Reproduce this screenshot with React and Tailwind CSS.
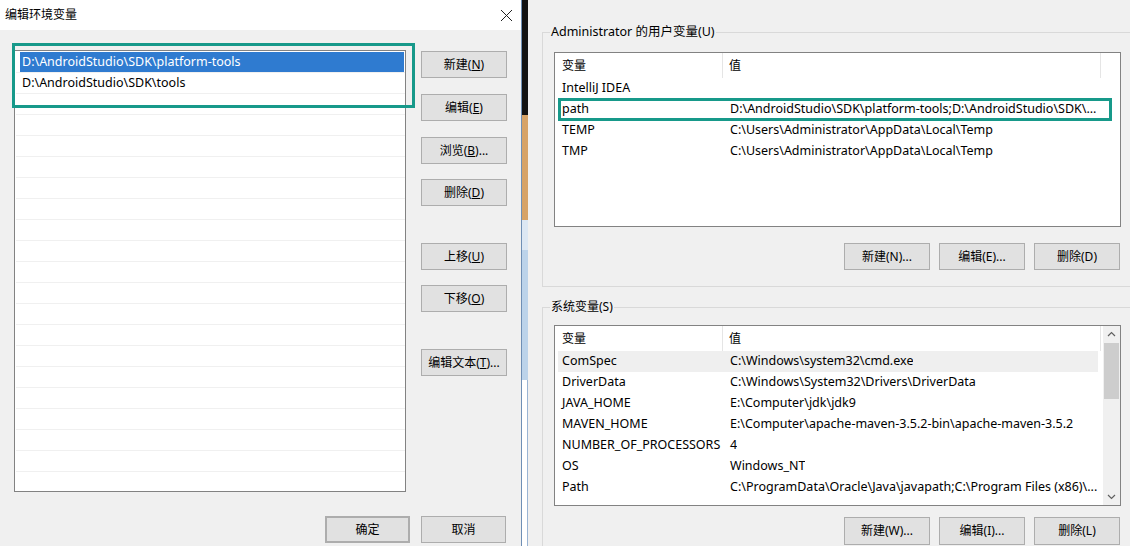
import React from "react";

const FONT = "font-['Noto_Sans','Noto_Sans_CJK_SC',sans-serif]";

const Btn = ({ children, className = "" }) => (
  <div
    className={`flex items-center justify-center h-[27px] bg-[#e1e1e1] border border-[#adadad] text-[12px] text-black leading-none ${className}`}
  >
    {children}
  </div>
);

const userVars = [
  ["IntelliJ IDEA", ""],
  ["path", "D:\\AndroidStudio\\SDK\\platform-tools;D:\\AndroidStudio\\SDK\\..."],
  ["TEMP", "C:\\Users\\Administrator\\AppData\\Local\\Temp"],
  ["TMP", "C:\\Users\\Administrator\\AppData\\Local\\Temp"],
];

const sysVars = [
  ["ComSpec", "C:\\Windows\\system32\\cmd.exe"],
  ["DriverData", "C:\\Windows\\System32\\Drivers\\DriverData"],
  ["JAVA_HOME", "E:\\Computer\\jdk\\jdk9"],
  ["MAVEN_HOME", "E:\\Computer\\apache-maven-3.5.2-bin\\apache-maven-3.5.2"],
  ["NUMBER_OF_PROCESSORS", "4"],
  ["OS", "Windows_NT"],
  ["Path", "C:\\ProgramData\\Oracle\\Java\\javapath;C:\\Program Files (x86)\\..."],
];

const ListHeader = () => (
  <div className="flex h-[25px] items-center text-[12px]">
    <div className="w-[168px] h-full flex items-center pl-[7px] border-r border-[#e5e5e5]">变量</div>
    <div className="w-[378px] h-full flex items-center pl-[6px] border-r border-[#e5e5e5]">值</div>
  </div>
);

const VarRow = ({ name, value, active }) => (
  <div className={`flex h-[21px] items-center text-[12.5px] ml-[3px] w-[540px] ${active ? "bg-[#efefef]" : ""}`}>
    <div className="w-[165px] pl-[4px] whitespace-nowrap">{name}</div>
    <div className="pl-[7px] whitespace-nowrap overflow-hidden">{value}</div>
  </div>
);

const LeftDialog = () => {
  const rows = Array.from({ length: 21 });
  return (
    <div className="w-[521px] h-full flex flex-col">
      <div className="h-[30px] bg-white flex items-center justify-between pl-[5px] pr-[8px]">
        <span className="text-[12px] text-black">编辑环境变量</span>
        <svg width="13" height="13" viewBox="0 0 13 13">
          <path d="M1 1 L12 12 M12 1 L1 12" stroke="#222" strokeWidth="1" fill="none" />
        </svg>
      </div>
      <div className="flex-1 bg-[#f0f0f0] flex flex-col">
        <div className="flex pt-[20px] pl-[14px]">
          <div className="relative w-[392px] h-[442px] bg-white border border-[#828282] pt-[1px] pl-[1px] overflow-visible">
            <div className="overflow-hidden h-full">
              {rows.map((_, i) => (
                <div key={i} className="h-[21px] border-b border-[#f0f0f0] flex items-center">
                  {i === 0 && (
                    <div className="ml-[4px] w-[384px] h-[20px] bg-[#2f7bd0] text-white text-[12.5px] flex items-center pl-[2px]">
                      D:\AndroidStudio\SDK\platform-tools
                    </div>
                  )}
                  {i === 1 && (
                    <div className="ml-[6px] text-[12.5px] text-black">D:\AndroidStudio\SDK\tools</div>
                  )}
                </div>
              ))}
            </div>
            <div className="absolute left-[-3px] top-[-8px] w-[403px] h-[65px] border-[3px] border-[#17998a]" />
          </div>
          <div className="ml-[15px] w-[86px] flex flex-col">
            <Btn className="mt-[1px]">新建(<u>N</u>)</Btn>
            <Btn className="mt-[16px]">编辑(<u>E</u>)</Btn>
            <Btn className="mt-[16px]">浏览(<u>B</u>)...</Btn>
            <Btn className="mt-[15px]">删除(<u>D</u>)</Btn>
            <Btn className="mt-[37px]">上移(<u>U</u>)</Btn>
            <Btn className="mt-[15px]">下移(<u>O</u>)</Btn>
            <Btn className="mt-[37px]">编辑文本(<u>T</u>)...</Btn>
          </div>
        </div>
        <div className="flex justify-end gap-[11px] pr-[15px] mt-[24px]">
          <Btn className="w-[85px] border-2 border-[#0078d7]">确定</Btn>
          <Btn className="w-[85px]">取消</Btn>
        </div>
      </div>
    </div>
  );
};

const Strip = () => (
  <div className="w-[7px] h-full flex flex-col border-l border-[#6f8fb5]">
    <div className="h-[115px] bg-[#121212]" />
    <div className="h-[105px] bg-[#d6a368]" />
    <div className="h-[30px] bg-[#dce7f3]" />
    <div className="h-[130px] bg-[#bcd3ea]" />
    <div className="flex-1 bg-white border-r border-[#9ab4d3]" />
  </div>
);

const RightDialog = () => (
  <div className="flex-1 h-full bg-[#f0f0f0] overflow-hidden text-black">
    <fieldset className="ml-[14px] mt-[24px] w-[620px] border border-[#d9d9d9] pl-[11px] pt-[12px] pb-[16px]">
      <legend className="ml-[-4px] px-[1px] text-[12.5px] leading-[16px]">Administrator 的用户变量(U)</legend>
      <div className="relative w-[567px] h-[175px] bg-white border border-[#828282]">
        <ListHeader />
        {userVars.map(([n, v]) => (
          <VarRow key={n} name={n} value={v} />
        ))}
        <div className="absolute left-[3px] top-[45px] w-[554px] h-[23px] border-[3px] border-[#17998a]" />
      </div>
      <div className="w-[567px] flex justify-end gap-[9px] pr-[1px] mt-[16px]">
        <Btn className="w-[86px]">新建(N)...</Btn>
        <Btn className="w-[86px]">编辑(E)...</Btn>
        <Btn className="w-[86px]">删除(D)</Btn>
      </div>
    </fieldset>
    <fieldset className="ml-[14px] mt-[12px] w-[620px] h-[300px] border border-[#d9d9d9] pl-[11px] pt-[10px]">
      <legend className="ml-[-4px] px-[1px] text-[12px] leading-[16px]">系统变量(S)</legend>
      <div className="flex w-[567px] h-[181px] bg-white border border-[#828282]">
        <div className="flex-1">
          <ListHeader />
          {sysVars.map(([n, v], i) => (
            <VarRow key={n} name={n} value={v} active={i === 0} />
          ))}
        </div>
        <div className="w-[17px] h-full bg-[#f0f0f0] flex flex-col items-center">
          <svg width="17" height="17" viewBox="0 0 17 17">
            <path d="M5 10 L8.5 6.5 L12 10" stroke="#606060" strokeWidth="1.2" fill="none" />
          </svg>
          <div className="w-[15px] h-[56px] bg-[#cdcdcd]" />
          <div className="flex-1" />
          <svg width="17" height="17" viewBox="0 0 17 17">
            <path d="M5 7 L8.5 10.5 L12 7" stroke="#606060" strokeWidth="1.2" fill="none" />
          </svg>
        </div>
      </div>
      <div className="w-[567px] flex justify-end gap-[9px] pr-[1px] mt-[11px]">
        <Btn className="w-[86px] h-[28px]">新建(W)...</Btn>
        <Btn className="w-[86px] h-[28px]">编辑(I)...</Btn>
        <Btn className="w-[86px] h-[28px]">删除(L)</Btn>
      </div>
    </fieldset>
  </div>
);

export default function App() {
  return (
    <div className={`flex w-[1130px] h-[546px] overflow-hidden ${FONT}`}>
      <LeftDialog />
      <Strip />
      <RightDialog />
    </div>
  );
}
